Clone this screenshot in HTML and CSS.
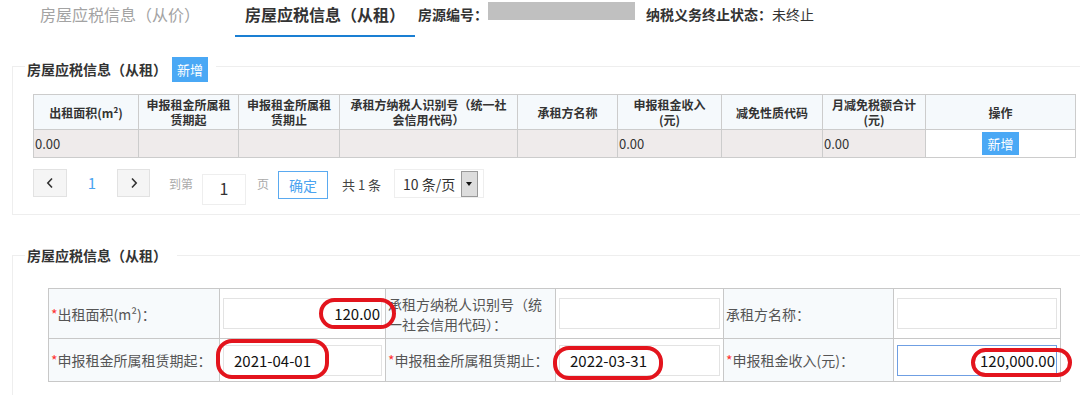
FILE: index.html
```html
<!DOCTYPE html>
<html lang="zh-CN">
  <head>
    <meta charset="UTF-8" />
    <title>房屋应税信息（从租）</title>
    <link rel="stylesheet" href="styles.css">
  </head>
  <body>
    <div class="tabs">
      <div class="tab">房屋应税信息（从价）</div>
      <div class="tab active">房屋应税信息（从租）</div>
      <div class="meta"><b>房源编号：</b><span class="mask"></span></div>
      <div class="meta status"><b>纳税义务终止状态：</b>未终止</div>
    </div>

    <fieldset class="panel list-panel">
      <legend class="panel-title">
        <span>房屋应税信息（从租）</span>
        <button class="btn-add">新增</button>
      </legend>

      <table class="grid">
        <colgroup>
          <col style="width: 105px" />
          <col style="width: 100px" />
          <col style="width: 101px" />
          <col style="width: 178px" />
          <col style="width: 100px" />
          <col style="width: 104px" />
          <col style="width: 101px" />
          <col style="width: 103px" />
          <col style="width: 150px" />
        </colgroup>
        <thead>
          <tr>
            <th>出租面积(m²)</th>
            <th>申报租金所属租赁期起</th>
            <th>申报租金所属租赁期止</th>
            <th>承租方纳税人识别号（统一社会信用代码）</th>
            <th>承租方名称</th>
            <th>申报租金收入<br />(元)</th>
            <th>减免性质代码</th>
            <th>月减免税额合计<br />(元)</th>
            <th>操作</th>
          </tr>
        </thead>
        <tbody>
          <tr>
            <td>0.00</td>
            <td></td>
            <td></td>
            <td></td>
            <td></td>
            <td>0.00</td>
            <td></td>
            <td>0.00</td>
            <td class="op"><button class="btn-add small">新增</button></td>
          </tr>
        </tbody>
      </table>

      <div class="pager">
        <button class="pg-btn">
          <svg width="8" height="12" viewBox="0 0 8 12"><polyline points="6,1.5 1.8,6 6,10.5" fill="none" stroke="#333" stroke-width="1.6" /></svg>
        </button>
        <span class="pg-cur">1</span>
        <button class="pg-btn">
          <svg width="8" height="12" viewBox="0 0 8 12"><polyline points="2,1.5 6.2,6 2,10.5" fill="none" stroke="#333" stroke-width="1.6" /></svg>
        </button>
        <span class="pg-label first">到第</span>
        <input class="pg-input" value="1" />
        <span class="pg-label">页</span>
        <button class="pg-ok">确定</button>
        <span class="pg-total">共 1 条</span>
        <div class="pg-size">
          <span>10 条/页</span>
          <span class="pg-arrow"></span>
        </div>
      </div>
    </fieldset>

    <fieldset class="panel form-panel">
      <legend class="panel-title plain">房屋应税信息（从租）</legend>

      <table class="form">
        <colgroup>
          <col style="width: 171px" />
          <col style="width: 166px" />
          <col style="width: 170px" />
          <col style="width: 168px" />
          <col style="width: 170px" />
          <col style="width: 167px" />
        </colgroup>
        <tr class="row-tall">
          <td class="label"><i>*</i>出租面积(m²)：</td>
          <td class="value">
            <div class="field">
              <input class="num" value="120.00" />
              <span class="mark mark-area"></span>
            </div>
          </td>
          <td class="label">承租方纳税人识别号（统一社会信用代码）：</td>
          <td class="value"><div class="field"><input /></div></td>
          <td class="label">承租方名称：</td>
          <td class="value"><div class="field"><input /></div></td>
        </tr>
        <tr class="row-short">
          <td class="label"><i>*</i>申报租金所属租赁期起：</td>
          <td class="value">
            <div class="field">
              <input class="date" value="2021-04-01" />
              <span class="mark mark-start"></span>
            </div>
          </td>
          <td class="label"><i>*</i>申报租金所属租赁期止：</td>
          <td class="value">
            <div class="field">
              <input class="date" value="2022-03-31" />
              <span class="mark mark-end"></span>
            </div>
          </td>
          <td class="label"><i>*</i>申报租金收入(元)：</td>
          <td class="value">
            <div class="field">
              <input class="num focus" value="120,000.00" />
              <span class="mark mark-rent"></span>
            </div>
          </td>
        </tr>
      </table>
    </fieldset>
  </body>
</html>
```

FILE: styles.css
```css
html,
body {
  overflow: hidden;
}

body {
  margin: 0;
  font-family: "Noto Sans CJK SC", "Microsoft YaHei", sans-serif;
  color: #333;
  background: #fff;
}

/* top tabs */
.tabs {
  display: flex;
  align-items: flex-start;
  height: 37px;
}

.tab {
  height: 35px;
  font-size: 16px;
  line-height: 28px;
  color: #a3a3a3;
  margin-left: 40px;
}

.tab.active {
  margin-left: 35px;
  padding: 0 10px;
  color: #333;
  font-weight: bold;
  border-bottom: 2px solid #1a7fd3;
}

.meta {
  font-size: 14px;
  line-height: 28px;
  margin-left: 3px;
  color: #333;
}

.mask {
  display: inline-block;
  vertical-align: top;
  width: 147px;
  height: 18px;
  margin-top: 2px;
  background: #c0c0c0;
}

.meta.status {
  margin-left: 11px;
}

/* panels */
.panel {
  min-width: 0;
  border: 1px solid #eee;
  margin: 0 -30px 0 12px;
}

.list-panel {
  margin-top: 20px;
  padding: 0 0 9px 20px;
}

.panel-title {
  display: flex;
  align-items: flex-start;
  height: 18px;
  margin-left: -8px;
  padding: 0 8px 0 2px;
  font-size: 14px;
  font-weight: bold;
  line-height: 25px;
  color: #333;
}

.btn-add {
  height: 25px;
  margin-left: 5px;
  padding: 0 5px;
  border: none;
  background: #4aa8f5;
  color: #fff;
  font-family: inherit;
  font-size: 13px;
  line-height: 25px;
}

.btn-add.small {
  height: 23px;
  margin: 0;
  padding: 0 5px;
  line-height: 23px;
}

/* list table */
.grid {
  width: 1042px;
  margin-top: 19px;
  table-layout: fixed;
  border-collapse: collapse;
}

.grid th,
.grid td {
  border: 1px solid #ccc;
  padding: 0 1px;
}

.grid th {
  height: 34px;
  padding: 0 6px;
  background: #f5f9fc;
  font-size: 12px;
  line-height: 15px;
  font-weight: bold;
  color: #333;
  text-align: center;
}

.grid td {
  height: 27px;
  background: #efebeb;
  font-size: 13px;
  color: #333;
}

.grid td.op {
  background: #fff;
  text-align: center;
}

/* pager */
.pager {
  display: flex;
  align-items: flex-start;
  margin-top: 11px;
  font-size: 12px;
}

.pg-btn {
  width: 34px;
  height: 28px;
  padding: 0;
  border: 1px solid #e2e2e2;
  background: #f5f5f5;
  display: flex;
  align-items: center;
  justify-content: center;
}

.pg-btn + .pg-cur + .pg-btn {
  width: 33px;
}

.pg-cur {
  width: 50px;
  line-height: 28px;
  text-align: center;
  font-size: 15px;
  color: #4aa3f0;
}

.pg-label {
  line-height: 30px;
  color: #aaa;
  margin-left: 11px;
}

.pg-label.first {
  margin-left: 19px;
  margin-right: 9px;
}

.pg-input {
  box-sizing: border-box;
  width: 44px;
  height: 31px;
  margin-top: 5px;
  padding: 0 0 3px;
  border: 1px solid #eee;
  text-align: center;
  font-family: inherit;
  font-size: 16px;
  color: #333;
}

.pg-ok {
  width: 50px;
  height: 28px;
  margin-left: 9px;
  margin-top: 2px;
  padding: 0;
  border: 1px solid #5aaaf0;
  background: #fff;
  color: #4aa3f0;
  font-family: inherit;
  font-size: 14px;
}

.pg-total {
  margin-left: 14px;
  line-height: 31px;
  font-size: 13px;
  color: #444;
}

.pg-size {
  box-sizing: border-box;
  display: flex;
  align-items: center;
  justify-content: space-between;
  width: 90px;
  height: 29px;
  margin-left: 13px;
  padding: 0 5px 0 8px;
  border: 1px solid #eee;
  font-size: 14px;
  color: #333;
}

.pg-arrow {
  box-sizing: border-box;
  width: 17px;
  height: 26px;
  border: 1px solid #999;
  background: #ddd;
  position: relative;
}

.pg-arrow::after {
  content: "";
  position: absolute;
  left: 4px;
  top: 10px;
  border-left: 3.5px solid transparent;
  border-right: 3.5px solid transparent;
  border-top: 4px solid #111;
}

/* form panel */
.form-panel {
  margin-top: 29px;
  padding: 0 0 30px 35px;
}

.panel-title.plain {
  display: block;
  height: 22px;
  line-height: 22px;
  margin-left: -23px;
  padding: 0 10px 0 2px;
}

.form {
  width: 1012px;
  margin-top: 22px;
  table-layout: fixed;
  border-collapse: collapse;
}

.form td {
  border: 1px solid #c8c8c8;
  padding: 0;
}

.row-tall td {
  height: 49px;
}

.row-short td {
  height: 42px;
}

.form .label {
  background: #f7fafc;
  padding-left: 2px;
  font-size: 14px;
  line-height: 20px;
  color: #555;
}

.form .label i {
  font-style: normal;
  color: #f33;
}

.form .value {
  background: #fff;
  padding: 0 3px;
}

.field {
  position: relative;
}

.field input {
  box-sizing: border-box;
  display: block;
  width: 100%;
  height: 31px;
  margin: 0;
  padding: 0 10px;
  border: 1px solid #e3e3e3;
  background: #fff;
  font-family: "Noto Sans CJK SC", sans-serif;
  font-size: 15px;
  color: #111;
  outline: none;
}

.field input.num {
  text-align: right;
  padding-right: 1px;
}

.field input.focus {
  border-color: #6f9fe3;
}

/* red hand-drawn marks over the screenshot */
.mark {
  position: absolute;
  box-sizing: border-box;
  border: 4px solid #e3141d;
  border-radius: 16px;
  pointer-events: none;
}

.mark-area {
  left: 96px;
  top: 0;
  width: 77px;
  height: 31px;
}

.mark-start {
  left: -7px;
  top: -6px;
  width: 113px;
  height: 40px;
}

.mark-end {
  left: -6px;
  top: 1px;
  width: 110px;
  height: 34px;
}

.mark-rent {
  left: 74px;
  top: 3px;
  width: 101px;
  height: 29px;
}
```
